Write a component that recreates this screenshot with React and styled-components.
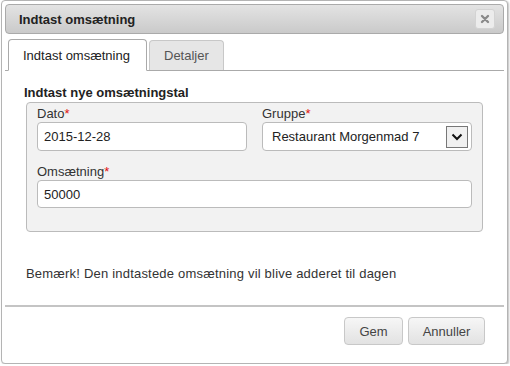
import React, {useState} from 'react';
import styled, {createGlobalStyle} from "styled-components";

const GlobalStyle = createGlobalStyle`
  html, body {
    margin: 0;
    padding: 0;
    background: #fff;
  }
  body {
    font-family: "Liberation Sans", Arial, sans-serif;
    font-size: 13px;
    color: #333;
  }
`

const Dialog = styled.div`
  box-sizing: border-box;
  width: 507px;
  height: 364px;
  margin: 0 0 0 1px;
  border: 1px solid #b4b4b4;
  border-radius: 4px;
  box-shadow: 1px 1px 2px rgba(0, 0, 0, 0.25);
  padding: 3px;
  display: flex;
  flex-direction: column;
  background: #fff;
`

const TitleBar = styled.div`
  box-sizing: border-box;
  height: 30px;
  display: flex;
  align-items: center;
  justify-content: space-between;
  padding: 0 8px 0 13px;
  border: 1px solid #aaa;
  border-radius: 4px;
  background: linear-gradient(#e3e3e3, #cacaca);
`

const Title = styled.span`
  font-weight: bold;
  font-size: 13px;
  color: #222;
`

const CloseButton = styled.button`
  box-sizing: border-box;
  width: 20px;
  height: 20px;
  padding: 0;
  display: flex;
  align-items: center;
  justify-content: center;
  border: 1px solid #d3d3d3;
  border-radius: 3px;
  background: #ececec;
  cursor: pointer;
`

const TabBar = styled.div`
  display: flex;
  align-items: flex-end;
  gap: 2px;
  margin-top: 5px;
  padding-left: 3px;
  border-bottom: 1px solid #aaa;
  height: 31px;
`

const Tab = styled.div`
  box-sizing: border-box;
  height: ${p => p.$active ? "32px" : "30px"};
  margin-bottom: ${p => p.$active ? "-1px" : "0"};
  padding: 0 14px;
  display: flex;
  align-items: center;
  border: 1px solid ${p => p.$active ? "#aaa" : "#c8c8c8"};
  border-bottom: ${p => p.$active ? "1px solid #fff" : "none"};
  border-radius: 4px 4px 0 0;
  background: ${p => p.$active ? "#fff" : "#e6e6e6"};
  color: ${p => p.$active ? "#222" : "#555"};
  font-size: 13px;
  cursor: pointer;
  width: ${p => p.$width}px;
`

const Panel = styled.div`
  display: flex;
  flex-direction: column;
  padding: 15px 19px 0 19px;
`

const SectionTitle = styled.div`
  font-weight: bold;
  font-size: 13px;
  color: #222;
  line-height: 14px;
`

const FieldBox = styled.div`
  box-sizing: border-box;
  margin: 2px 0 0 2px;
  width: 457px;
  height: 130px;
  border: 1px solid #bbb;
  border-radius: 4px;
  background: #f2f2f2;
  padding: 4px 10px 0 10px;
  display: grid;
  grid-template-columns: 210px 210px;
  column-gap: 15px;
  row-gap: 14px;
  align-content: start;
`

const Field = styled.div`
  display: flex;
  flex-direction: column;
  grid-column: ${p => p.$wide ? "1 / span 2" : "auto"};
`

const Label = styled.label`
  font-size: 13px;
  color: #333;
  line-height: 14px;
  margin-bottom: 1px;

  span {
    color: #e01010;
  }
`

const TextInput = styled.input`
  box-sizing: border-box;
  height: ${p => p.$h || 29}px;
  width: 100%;
  border: 1px solid #bbb;
  border-radius: 4px;
  background: #fff;
  padding: 0 6px;
  font-family: "Liberation Sans", Arial, sans-serif;
  font-size: 13px;
  color: #222;
  outline: none;
`

const SelectBox = styled.div`
  box-sizing: border-box;
  height: 29px;
  width: 100%;
  border: 1px solid #bbb;
  border-radius: 4px;
  background: #fff;
  display: flex;
  align-items: center;
  justify-content: space-between;
  padding: 0 3px 0 9px;
  font-size: 13px;
  color: #222;
`

const ArrowBox = styled.div`
  box-sizing: border-box;
  width: 22px;
  height: 22px;
  border: 1px solid #777;
  background: #f0f0f0;
  display: flex;
  align-items: center;
  justify-content: center;
`

const Note = styled.p`
  margin: 34px 0 0 2px;
  font-size: 13px;
  letter-spacing: 0.2px;
  line-height: 15px;
  color: #333;
`

const Divider = styled.div`
  height: 2px;
  background: #c4c4c4;
  margin-top: 24px;
`

const Footer = styled.div`
  display: flex;
  justify-content: flex-end;
  gap: 5px;
  padding: 10px 19px 0 0;
`

const Button = styled.button`
  box-sizing: border-box;
  height: 28px;
  width: ${p => p.$width}px;
  border: 1px solid #c8c8c8;
  border-radius: 4px;
  background: linear-gradient(#f6f6f6, #e2e2e2);
  font-family: "Liberation Sans", Arial, sans-serif;
  font-size: 13px;
  color: #444;
  cursor: pointer;
`

const App = () => {
    const [tab, setTab] = useState(0)
    const [dato, setDato] = useState("2015-12-28")
    const [amount, setAmount] = useState("50000")

    return (
        <>
            <GlobalStyle/>
            <Dialog>
                <TitleBar>
                    <Title>Indtast omsætning</Title>
                    <CloseButton aria-label="Luk">
                        <svg width="10" height="10" viewBox="0 0 10 10">
                            <path d="M2 2 L8 8 M8 2 L2 8" stroke="#8a8a8a" strokeWidth="2.4"
                                  strokeLinecap="round"/>
                        </svg>
                    </CloseButton>
                </TitleBar>
                <TabBar>
                    <Tab $active={tab === 0} $width={139} onClick={() => setTab(0)}>Indtast omsætning</Tab>
                    <Tab $active={tab === 1} $width={75} onClick={() => setTab(1)}>Detaljer</Tab>
                </TabBar>
                <Panel>
                    <SectionTitle>Indtast nye omsætningstal</SectionTitle>
                    <FieldBox>
                        <Field>
                            <Label>Dato<span>*</span></Label>
                            <TextInput value={dato} onChange={e => setDato(e.target.value)}/>
                        </Field>
                        <Field>
                            <Label>Gruppe<span>*</span></Label>
                            <SelectBox>
                                Restaurant Morgenmad 7
                                <ArrowBox>
                                    <svg width="12" height="8" viewBox="0 0 12 8">
                                        <path d="M1.5 1.5 L6 6 L10.5 1.5" fill="none" stroke="#111"
                                              strokeWidth="2"/>
                                    </svg>
                                </ArrowBox>
                            </SelectBox>
                        </Field>
                        <Field $wide>
                            <Label>Omsætning<span>*</span></Label>
                            <TextInput $h={28} value={amount} onChange={e => setAmount(e.target.value)}/>
                        </Field>
                    </FieldBox>
                    <Note>Bemærk! Den indtastede omsætning vil blive adderet til dagen</Note>
                </Panel>
                <Divider/>
                <Footer>
                    <Button $width={59}>Gem</Button>
                    <Button $width={77}>Annuller</Button>
                </Footer>
            </Dialog>
        </>
    )
}
export default App
